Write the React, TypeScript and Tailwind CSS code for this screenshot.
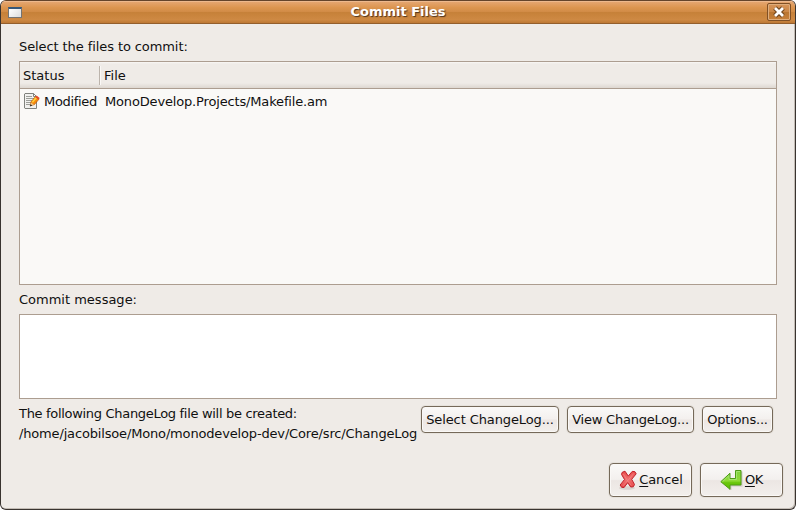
import React from "react";

function Button({ className, children }: { className: string; children: React.ReactNode }) {
  return (
    <button
      className={`flex shrink-0 items-center justify-center whitespace-nowrap rounded-[4px] border border-[#756959] bg-[linear-gradient(#faf9f8_0%,#f3f0ee_48%,#ece6e3_52%,#f2efec_100%)] shadow-[0_0_0_1px_#e6e2dc,inset_0_0_0_1px_#faf8f6] ${className}`}
    >
      {children}
    </button>
  );
}

function EditIcon() {
  return (
    <svg width="16" height="16" viewBox="0 0 16 16" className="block shrink-0">
      <path d="M1 .5h8.5l3 3v12H1L.5 15V1z" fill="#f1f1ef" stroke="#80827d" />
      <path d="M9.5.5v3h3z" fill="#fff" stroke="#80827d" />
      <path d="M2 3.5h6M2 5.5h8M2 7.5h7M2 9.5h5M2 11.5h4" stroke="#9c9e99" />
      <path d="M6.3 12.7 7 8.8l4.5-5.2 3.4 2.7-4.5 5.3z" fill="#f78a0b" stroke="#b95500" strokeWidth=".7" />
      <path d="m8.3 9.2 4-4.6" stroke="#fdd03c" strokeWidth="1.7" />
      <path d="m11.3 4 1.3-1.4 3.1 2.5-1.1 1.6z" fill="#e34a28" />
      <path d="m6.3 12.9.8-3.5 2.8 2.3z" fill="#e9c58c" />
      <path d="m5.9 13.5.6-2.3 1.8 1.4z" fill="#222" />
    </svg>
  );
}

function CancelIcon() {
  return (
    <svg width="20" height="20" viewBox="0 0 20 20" className="block shrink-0">
      <defs>
        <linearGradient id="red" x2="0" y2="1">
          <stop stopColor="#ea4a4a" />
          <stop offset=".5" stopColor="#ef7070" />
          <stop offset="1" stopColor="#e74444" />
        </linearGradient>
      </defs>
      <ellipse cx="8" cy="18" rx="8" ry="1.7" fill="#d9d4cf" />
      <path
        d="M3.2 2.3 6 1.2l3.3 4.9 3.9-4.7 2.6.2 1.4 2.2-4.5 5.5 2.8 5.2-1.2 2.3-2.6.2-3-4.3-3.6 4.8-2.5-.2-1.5-2.3 4.4-5.5-3-5.1z"
        fill="url(#red)"
        stroke="#bf222b"
        strokeLinejoin="round"
      />
      <path d="m4.4 4 4 6.5 4 5M14.8 3.4 9 10.3 3.8 16" fill="none" stroke="#f59090" strokeWidth=".6" />
    </svg>
  );
}

function OkIcon() {
  return (
    <svg width="24" height="24" viewBox="0 0 24 24" className="block shrink-0">
      <defs>
        <linearGradient id="green" x2="0" y2="1">
          <stop stopColor="#7fd040" />
          <stop offset=".55" stopColor="#8fdb35" />
          <stop offset=".65" stopColor="#69c60b" />
          <stop offset="1" stopColor="#5fc000" />
        </linearGradient>
      </defs>
      <path d="M21.5 3.5v14h-11v4.5" fill="none" stroke="#cfcac5" strokeWidth="2" />
      <path
        d="M15.5 2.5h5.5v14.5h-11v4.3L.8 13.7l9.2-8.5v5.3h5.5z"
        fill="url(#green)"
        stroke="#4e9a16"
        strokeLinejoin="round"
      />
      <path d="M16.5 9.5v-6h3.5M16.5 9.5v2H9V7.5l-6.5 6.2" fill="none" stroke="#a9e77b" strokeWidth=".8" />
    </svg>
  );
}

export default function App() {
  return (
    <div className="h-[510px] w-[796px] bg-white font-['DejaVu_Sans',sans-serif] text-[13px] leading-[20px] text-[#101010]">
      <div className="flex h-full flex-col overflow-hidden rounded-[6px] border border-[#39332f] border-t-[#64442b] bg-[#efebe7] shadow-[inset_-1px_-1px_0_#c3bcb5]">
        <header className="flex h-[23px] shrink-0 items-center justify-between border-b border-[#935e2c] bg-[linear-gradient(#e6a875_0%,#dc954f_30%,#d28c47_48%,#c68139_52%,#ce8943_85%,#bd7834_100%)] pl-[7px] pr-[4px] shadow-[inset_0_1px_0_#edb98d]">
          <div className="mt-[1px] h-[11px] w-[14px] border border-t-2 border-[#747474] border-t-[#365779] bg-[linear-gradient(135deg,#fff,#dcdcdc)]" />
          <h1 className="ml-[7px] text-[13px] font-bold leading-[22px] text-white [text-shadow:1px_1px_1px_#4d321e]">Commit Files</h1>
          <button className="flex h-[18px] w-[24px] items-center justify-center rounded-[2px] border border-[#805025] bg-[linear-gradient(#d79459_0%,#cc8847_48%,#ba7530_52%,#c7813b_100%)] shadow-[inset_0_0_0_1px_#dfad7c]">
            <svg width="12" height="12" viewBox="0 0 12 12">
              <path d="m2 2 8 8M10 2 2 10" stroke="#70461f" strokeWidth="5" />
              <path d="m2 2 8 8M10 2 2 10" stroke="#fff" strokeWidth="2.8" />
            </svg>
          </button>
        </header>

        <main className="flex flex-1 flex-col px-[18px] pt-[13px]">
          <p className="h-[24px] tracking-[-0.09px]">Select the files to commit:</p>
          <section className="flex h-[224px] shrink-0 flex-col border border-[#ac9d90] bg-[#faf9f7]">
            <div className="flex h-[27px] shrink-0 items-center border-b border-[#ac9d90] bg-[linear-gradient(#f9f7f5_0,#efebe7_2px,#efebe7_21px,#ddd7d1_26px)]">
              <span className="w-[79px] pl-[3px] pt-[2px]">Status</span>
              <span className="h-[19px] w-[2px] border-l border-[#bcb4ac] bg-[#faf8f6]" />
              <span className="pl-[3px] pt-[2px]">File</span>
            </div>
            <div className="flex h-[24px] items-center pl-[4px]">
              <EditIcon />
              <span className="w-[60px] pl-[4px] pt-[2px] tracking-[-0.32px]">Modified</span>
              <span className="pl-[5px] pt-[2px] tracking-[-0.16px]">MonoDevelop.Projects/Makefile.am</span>
            </div>
          </section>
          <p className="mt-[5px] h-[24px]">Commit message:</p>
          <textarea className="block h-[85px] w-full shrink-0 resize-none border border-[#ac9d90] bg-white outline-none" />
          <div className="mt-[4px] flex">
            <p className="w-[402px] whitespace-nowrap pt-[1px]">
              <span className="tracking-[-0.31px]">The following ChangeLog file will be created:</span>
              <br />
              <span className="tracking-[-0.16px]">/home/jacobilsoe/Mono/monodevelop-dev/Core/src/ChangeLog</span>
            </p>
            <div className="mt-[3px] flex h-[27px] gap-[8px]">
              <Button className="w-[138px] tracking-[-0.1px]">Select ChangeLog...</Button>
              <Button className="w-[127px] tracking-[-0.22px]">View ChangeLog...</Button>
              <Button className="w-[71px] tracking-[-0.2px]">Options...</Button>
            </div>
          </div>
        </main>

        <footer className="mb-[12px] mr-[12px] flex h-[34px] shrink-0 justify-end gap-[8px]">
          <Button className="w-[83px] pl-[1px]">
            <CancelIcon />
            <span className="tracking-[-0.1px]"><u className="underline-offset-2">C</u>ancel</span>
          </Button>
          <Button className="w-[83px]">
            <OkIcon />
            <span className="ml-[1px] tracking-[-0.3px]"><u className="underline-offset-2">O</u>K</span>
          </Button>
        </footer>
      </div>
    </div>
  );
}
